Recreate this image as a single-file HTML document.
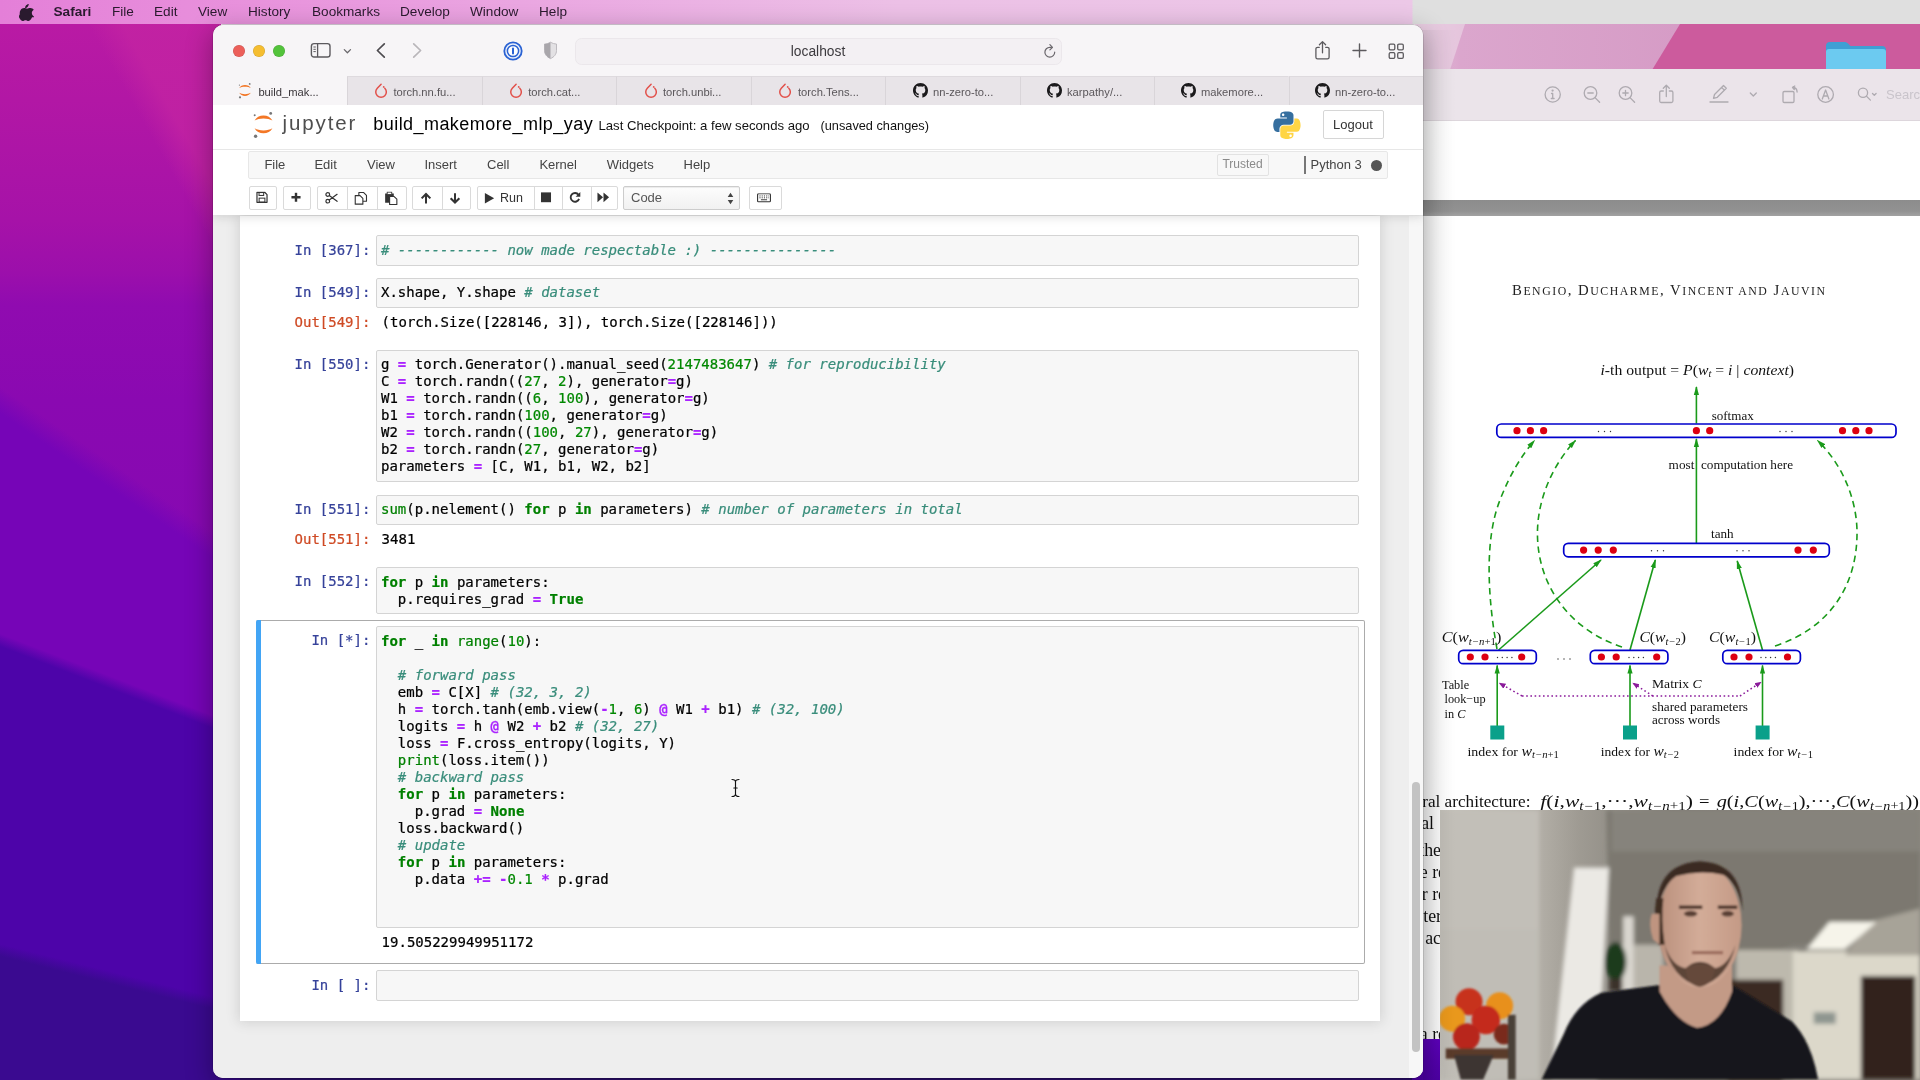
<!DOCTYPE html>
<html lang="en">
<head>
<meta charset="utf-8">
<title>build_makemore_mlp_yay</title>
<style>
*{box-sizing:border-box;margin:0;padding:0}
html,body{width:1920px;height:1080px;overflow:hidden}
body{position:relative;font-family:"Liberation Sans",sans-serif;background:#5a06b0;color:#000}
.abs{position:absolute}
#sf,#pv,#menubar{will-change:transform}
#wall{left:0;top:0;width:1920px;height:1080px;background:linear-gradient(180deg,#b91aa4 0,#9c10ac 330px,#7606b6 560px,#5004aa 720px,#3d0894 980px,#2c0e70 1080px)}
/* mac menubar */
#menubar{left:0;top:0;width:1920px;height:24px;background:linear-gradient(90deg,#e47fd8 0,#e892dc 250px,#eaa6e1 520px,#ecc0e6 900px,#ecc8e7 1412px,#dfdfdf 1413px,#dfdfdf 1920px);}
#menubar span{position:absolute;top:0;height:24px;line-height:23px;font-size:13.6px;color:#2a1a2e;white-space:nowrap}
/* preview window (right) */
#pv{left:1412px;top:24px;width:508px;height:1056px;overflow:hidden}
/* safari window */
#sf{left:213px;top:25px;width:1210px;height:1053px;border-radius:10px;background:#eeeeee;overflow:hidden;box-shadow:0 0 0 .5px rgba(0,0,0,.22),0 8px 26px 2px rgba(0,0,0,.30)}
#sftool{left:0;top:0;width:1210px;height:51px;background:#f7f5f7}
#sftabs{left:0;top:51px;width:1210px;height:29px;background:#e8e4e8}
.tab{position:absolute;top:0;height:29px;border-left:1px solid #d9d5d9;border-top:1px solid #dedade;font-size:11.200px;color:#5a565a;line-height:29px;white-space:nowrap}
.tab.act{background:#f7f5f7;border-left:none;border-top:none;color:#3a363a}
.tab .tx{position:absolute;top:1.500px}
.tab:not(.act) .tx{top:.5px;margin-left:-1px}
.tab:not(.act) svg{margin-top:-1px}
.tab svg{position:absolute}
#page{left:0;top:80px;width:1210px;height:973px;background:#eeeeee;overflow:hidden}
#jhead{left:0;top:0;width:1210px;height:109.500px;background:#fff;box-shadow:0 0 10px 1px rgba(87,87,87,.22)}
#jmenu{left:35px;top:46px;width:1140px;height:27.500px;background:#f8f8f8;border:1px solid #e7e7e7;border-radius:2px}
#jmenu span{position:absolute;top:0;line-height:25px;font-size:13px;color:#444;white-space:nowrap}
.tb{position:absolute;top:81px;height:23.500px;border:1px solid #dadada;background:#fff;border-radius:2px}
.tb i{position:absolute;top:0;bottom:0;width:1px;background:#dadada}
.tb svg{position:absolute;transform:translate(-1.500px,-1.200px) scale(.93)}
#nb{left:27px;top:111px;width:1140px;height:805px;background:#fff;box-shadow:0 0 12px 1px rgba(87,87,87,.2)}
.code,.prompt,.out{font-family:"DejaVu Sans Mono","Liberation Mono",monospace;font-size:14px;line-height:17px;white-space:pre;-webkit-text-stroke:.22px}
.inp{position:absolute;left:136px;width:983px;background:#f7f7f7;border:1px solid #d4d4d4;border-radius:2px}
.inp .code{position:absolute;left:4px;top:5.600px;color:#000}
.prompt{position:absolute;left:0;width:130.400px;text-align:right}
.pin{color:#36429a}.pout{color:#cf4a24;transform:translateY(1.200px)}
.out{position:absolute;left:141.600px;color:#000;transform:translateY(1.200px)}
.c{color:#398d7b;font-style:italic}.k{color:#008000;font-weight:bold}.n{color:#080}.o{color:#aa22ff;font-weight:bold}.b{color:#008000}
/* pdf */
.ser{font-family:"Liberation Serif",serif}
</style>
</head>
<body>
<div id="wall" class="abs"></div>
<div class="abs" style="left:0;top:0;width:240px;height:1080px;background:linear-gradient(193.97deg,rgba(58,10,144,0) 88.05%,rgba(58,10,144,1) 89.14%),linear-gradient(201.06deg,rgba(77,4,169,0) 61.92%,rgba(77,4,169,1) 63.02%),linear-gradient(214.25deg,rgba(118,5,183,0) 44.24%,rgba(118,5,183,1) 46.38%),linear-gradient(60.51deg,rgba(196,36,162,0) 80.51%,rgba(196,36,162,.75) 84.56%),linear-gradient(180deg,#b91aa4 24px,#b217a5 100px,#a612a8 220px,#9c0fab 272px,#900bb0 305px,#8a09b1 400px,#8509b2 600px)"></div>

<!-- PREVIEW -->
<div id="pv" class="abs">
 <!-- wallpaper strip -->
 <div class="abs" style="left:0;top:0px;width:508px;height:46px;background:#cc5b9d"></div>
 <svg class="abs" style="left:0;top:0px" width="508" height="46" viewBox="0 0 508 46"><defs><linearGradient id="pg1" x1="0" x2="1"><stop offset="0" stop-color="#e6c6dd"/><stop offset=".18" stop-color="#dba6cd"/><stop offset="1" stop-color="#d69cc6"/></linearGradient></defs><path d="M0 0H268L240 46H0z" fill="url(#pg1)"/><path d="M0 0H53L38 46H0z" fill="#ead3e4" opacity=".7"/></svg>
 <!-- folder -->
 <svg class="abs" style="left:413px;top:16px" width="62" height="30" viewBox="0 0 62 30"><path d="M1 30V6a4 4 0 0 1 4-4h14c2 0 3 .6 4.500 2l2 2H57a4 4 0 0 1 4 4v20z" fill="#3f9fd4"/><path d="M1 30V12a3 3 0 0 1 3-3h54a3 3 0 0 1 3 3v18z" fill="#6ccaf0"/></svg>
 <!-- toolbar -->
 <div class="abs" style="left:0;top:45px;width:508px;height:52px;background:#ebe4ea;border-bottom:1px solid #ddd6dc"></div>
 <g></g>
 <svg class="abs" style="left:128px;top:56px" width="380" height="30" viewBox="0 0 380 30" fill="none" stroke="#aeaab0" stroke-width="1.300" stroke-linecap="round" stroke-linejoin="round">
  <circle cx="12.700" cy="14.500" r="7.600"/><path d="M12.700 13.500v5M11.300 18.500h2.800M11.500 13.500h1.200"/><circle cx="12.600" cy="10.600" r=".5" fill="#aeaab0"/>
  <circle cx="50.500" cy="13" r="6.300"/><path d="M55 17.600l4.600 4.600M47.800 13h5.400"/>
  <circle cx="85.500" cy="13" r="6.300"/><path d="M90 17.600l4.600 4.600M82.800 13h5.400M85.500 10.300v5.400"/>
  <path d="M123.300 11h-2.100a1.500 1.500 0 0 0-1.500 1.500v8.500a1.500 1.500 0 0 0 1.500 1.500h10.200a1.500 1.500 0 0 0 1.500-1.500v-8.500a1.500 1.500 0 0 0-1.500-1.500h-2.100M126.300 16.500V5.500M123.300 8.300l3-3 3 3"/>
  <path d="M170 22h18M173.500 18.300l1-3.800 9-9 2.800 2.800-9 9zM181.600 7.400l2.800 2.800"/>
  <path d="M210.300 13l3 3 3-3"/>
  <rect x="243" y="11.500" width="11" height="11" rx="1.300"/><path d="M252.500 7.500c3 0 4.600 1.600 4.600 4.600M254.800 6l-2.300 1.500 1.800 2"/>
  <circle cx="285.600" cy="14.500" r="7.800"/><path d="M282.300 19l3.300-9 3.300 9M283.600 16h4"/>
  <circle cx="323" cy="12.700" r="4.600"/><path d="M326.400 16.100l4 4M332.500 13.500l1.800 1.800 1.800-1.800"/>
 </svg>
 <div class="abs" style="left:474px;top:62px;font-size:13px;line-height:18px;color:#c9c4cb">Search</div>
 <!-- white gap + grey bar + page -->
 <div class="abs" style="left:0;top:97px;width:508px;height:80px;background:#fff"></div>
 <div class="abs" style="left:0;top:176px;width:508px;height:15.500px;background:linear-gradient(#8c8c8c,#929292 70%,#a2a2a2)"></div>
 <div class="abs" style="left:0;top:191.5px;width:508px;height:823.5px;background:#fff"></div>
 <div class="abs" style="left:0;top:1015px;width:508px;height:41px;background:linear-gradient(#5e00be,#4e00a6)"></div>
<svg class="abs ser" style="left:0;top:0" width="508" height="1015" viewBox="1412 24 508 1015" font-family="Liberation Serif, serif">
 <defs>
  <marker id="ag" markerUnits="userSpaceOnUse" viewBox="0 0 9 6" refX="8" refY="3" markerWidth="9" markerHeight="6" orient="auto-start-reverse"><path d="M0 .4L9 3L0 5.600z" fill="#1a9a1a"/></marker>
  <marker id="ap" viewBox="0 0 10 10" refX="8" refY="5" markerWidth="4.600" markerHeight="4.600" orient="auto-start-reverse"><path d="M0 1L10 5L0 9z" fill="#8a1a9a"/></marker>
 </defs>
 <!-- title -->
 <text id="pdftitle" x="1512" y="294.500" font-size="14.800" fill="#222" textLength="313" lengthAdjust="spacing">B<tspan font-size="11.800">ENGIO</tspan>, D<tspan font-size="11.800">UCHARME</tspan>, V<tspan font-size="11.800">INCENT AND</tspan> J<tspan font-size="11.800">AUVIN</tspan></text>
 <!-- top label -->
 <text x="1600.500" y="374.500" font-size="14.300" fill="#111" textLength="193.500" lengthAdjust="spacingAndGlyphs"><tspan font-style="italic">i</tspan>-th output = <tspan font-style="italic">P</tspan>(<tspan font-style="italic">w</tspan><tspan font-size="9.500" font-style="italic" dy="2.500">t</tspan><tspan dy="-2.500"> </tspan> = <tspan font-style="italic"> i</tspan> | <tspan font-style="italic">context</tspan>)</text>
 <!-- green solid lines -->
 <g stroke="#1a9a1a" stroke-width="1.600" fill="none">
  <path d="M1696.400 423.500V387" marker-end="url(#ag)"/>
  <path d="M1696.400 543.500V439" marker-end="url(#ag)"/>
  <path d="M1498.600 650L1601 560" marker-end="url(#ag)"/>
  <path d="M1630 650L1655.300 560" marker-end="url(#ag)"/>
  <path d="M1762.500 650L1737.200 561" marker-end="url(#ag)"/>
  <path d="M1497.200 726V665.500" marker-end="url(#ag)"/>
  <path d="M1630 726V665.500" marker-end="url(#ag)"/>
  <path d="M1762.500 726V665.500" marker-end="url(#ag)"/>
 </g>
 <!-- green dashed curves -->
 <g stroke="#1a9a1a" stroke-width="1.600" fill="none" stroke-dasharray="6.500 4.500">
  <path d="M1497 649C1488 600 1484 540 1500 500C1510 474 1522 455 1534.500 440.500" marker-end="url(#ag)"/>
  <path d="M1622 647C1570 630 1536 585 1537.500 530C1538.500 495 1555 462 1575.500 440.500" marker-end="url(#ag)"/>
  <path d="M1775 646C1830 628 1858 585 1857 530C1856 495 1840 462 1817.500 440.500" marker-end="url(#ag)"/>
 </g>
 <!-- boxes -->
 <g stroke="#0000cc" stroke-width="1.700" fill="#fff">
  <rect x="1496.800" y="424" width="399.200" height="13.400" rx="4.500"/>
  <rect x="1563.700" y="543.400" width="265.600" height="13.400" rx="4.500"/>
  <rect x="1458.700" y="650.300" width="77.600" height="13.400" rx="4.500"/>
  <rect x="1590.300" y="650.300" width="77.600" height="13.400" rx="4.500"/>
  <rect x="1722.800" y="650.300" width="77.600" height="13.400" rx="4.500"/>
 </g>
 <g fill="#dd0011">
  <circle cx="1517" cy="430.7" r="3.6"/><circle cx="1530.4" cy="430.7" r="3.6"/><circle cx="1543.6" cy="430.7" r="3.6"/><circle cx="1696.4" cy="430.7" r="3.6"/><circle cx="1709.7" cy="430.7" r="3.6"/><circle cx="1842.5" cy="430.7" r="3.6"/><circle cx="1855.8" cy="430.7" r="3.6"/><circle cx="1869" cy="430.7" r="3.6"/>
  <circle cx="1583.6" cy="550.1" r="3.6"/><circle cx="1598.2" cy="550.1" r="3.6"/><circle cx="1613.3" cy="550.1" r="3.6"/><circle cx="1798" cy="550.1" r="3.6"/><circle cx="1813.3" cy="550.1" r="3.6"/>
  <circle cx="1470.3" cy="657" r="3.6"/><circle cx="1485" cy="657" r="3.6"/><circle cx="1521.7" cy="657" r="3.6"/><circle cx="1601.4" cy="657" r="3.6"/><circle cx="1616.2" cy="657" r="3.6"/><circle cx="1656.7" cy="657" r="3.6"/><circle cx="1734" cy="657" r="3.6"/><circle cx="1749" cy="657" r="3.6"/><circle cx="1787.5" cy="657" r="3.6"/>
 </g>
 <g fill="#333">
  <circle cx="1598.5" cy="431.5" r="0.7"/><circle cx="1604.5" cy="431.5" r="0.7"/><circle cx="1610.5" cy="431.5" r="0.7"/><circle cx="1780" cy="431.5" r="0.7"/><circle cx="1786" cy="431.5" r="0.7"/><circle cx="1792" cy="431.5" r="0.7"/>
  <circle cx="1651.5" cy="550.8" r="0.7"/><circle cx="1657.5" cy="550.8" r="0.7"/><circle cx="1663.5" cy="550.8" r="0.7"/><circle cx="1737" cy="550.8" r="0.7"/><circle cx="1743" cy="550.8" r="0.7"/><circle cx="1749" cy="550.8" r="0.7"/>
  <circle cx="1497.5" cy="657.5" r="0.7"/><circle cx="1502.3" cy="657.5" r="0.7"/><circle cx="1507.1" cy="657.5" r="0.7"/><circle cx="1511.9" cy="657.5" r="0.7"/><circle cx="1629" cy="657.5" r="0.7"/><circle cx="1633.8" cy="657.5" r="0.7"/><circle cx="1638.6" cy="657.5" r="0.7"/><circle cx="1643.4" cy="657.5" r="0.7"/><circle cx="1761" cy="657.5" r="0.7"/><circle cx="1765.8" cy="657.5" r="0.7"/><circle cx="1770.6" cy="657.5" r="0.7"/><circle cx="1775.4" cy="657.5" r="0.7"/>
  <circle cx="1558" cy="659" r="0.7"/><circle cx="1564" cy="659" r="0.7"/><circle cx="1570" cy="659" r="0.7"/>
 </g>
 <!-- teal squares -->
 <g fill="#0aa08a"><rect x="1490.300" y="725.500" width="14" height="14"/><rect x="1623" y="725.500" width="14" height="14"/><rect x="1755.600" y="725.500" width="14" height="14"/></g>
 <!-- purple dotted -->
 <g stroke="#8a1a9a" stroke-width="1.500" fill="none" stroke-dasharray="1.600 2.600">
  <path d="M1522 696H1740"/>
  <path d="M1522 696L1500 683.500" marker-end="url(#ap)"/>
  <path d="M1740 696L1760.500 682.500" marker-end="url(#ap)"/>
  <path d="M1652.800 696L1633.500 683.500" marker-end="url(#ap)"/>
 </g>
 <!-- labels -->
 <g fill="#111" font-size="12.300">
  <text x="1711.700" y="419.500" textLength="42" lengthAdjust="spacingAndGlyphs">softmax</text>
  <text x="1668.600" y="469.400" textLength="124.500" lengthAdjust="spacingAndGlyphs">most&#160;&#160;computation here</text>
  <text x="1711" y="538.300" textLength="22.600" lengthAdjust="spacingAndGlyphs">tanh</text>
  <text x="1442" y="689">Table</text>
  <text x="1444.500" y="703.400">look−up</text>
  <text x="1444.500" y="718">in <tspan font-style="italic">C</tspan></text>
  <text x="1652" y="688" textLength="49.500" lengthAdjust="spacingAndGlyphs">Matrix <tspan font-style="italic">C</tspan></text>
  <text x="1652" y="711" textLength="96" lengthAdjust="spacingAndGlyphs">shared parameters</text>
  <text x="1652" y="724.300" textLength="68" lengthAdjust="spacingAndGlyphs">across words</text>
  <text x="1467.500" y="755.500" textLength="91.500" lengthAdjust="spacingAndGlyphs">index for <tspan font-style="italic" font-size="14">w</tspan><tspan font-style="italic" font-size="9.500" dy="2.800">t−n</tspan><tspan font-size="9.500">+1</tspan></text>
  <text x="1600.800" y="755.500" textLength="78.200" lengthAdjust="spacingAndGlyphs">index for <tspan font-style="italic" font-size="14">w</tspan><tspan font-style="italic" font-size="9.500" dy="2.800">t−</tspan><tspan font-size="9.500">2</tspan></text>
  <text x="1733.600" y="755.500" textLength="79.400" lengthAdjust="spacingAndGlyphs">index for <tspan font-style="italic" font-size="14">w</tspan><tspan font-style="italic" font-size="9.500" dy="2.800">t−</tspan><tspan font-size="9.500">1</tspan></text>
 </g>
 <g fill="#111" font-size="14.300">
  <text x="1441.700" y="641.700" textLength="59.700" lengthAdjust="spacingAndGlyphs"><tspan font-style="italic">C</tspan>(<tspan font-style="italic">w</tspan><tspan font-style="italic" font-size="9.500" dy="2.800">t−n</tspan><tspan font-size="9.500">+1</tspan><tspan dy="-2.800">)</tspan></text>
  <text x="1639.400" y="641.700" textLength="46.600" lengthAdjust="spacingAndGlyphs"><tspan font-style="italic">C</tspan>(<tspan font-style="italic">w</tspan><tspan font-style="italic" font-size="9.500" dy="2.800">t−</tspan><tspan font-size="9.500">2</tspan><tspan dy="-2.800">)</tspan></text>
  <text x="1709" y="641.700" textLength="47" lengthAdjust="spacingAndGlyphs"><tspan font-style="italic">C</tspan>(<tspan font-style="italic">w</tspan><tspan font-style="italic" font-size="9.500" dy="2.800">t−</tspan><tspan font-size="9.500">1</tspan><tspan dy="-2.800">)</tspan></text>
 </g>
 <!-- formula line -->
 <g font-size="17.300" fill="#111">
 <text x="1422.200" y="807.200" textLength="108.300" lengthAdjust="spacingAndGlyphs">ral architecture:</text>
 <text x="1540.300" y="807.200" textLength="152.700" lengthAdjust="spacingAndGlyphs"><tspan font-style="italic">f</tspan>(<tspan font-style="italic">i</tspan>,<tspan font-style="italic">w</tspan><tspan font-style="italic" font-size="12" dy="2.400">t−</tspan><tspan font-size="12">1</tspan><tspan dy="-2.400">,</tspan>···,<tspan font-style="italic">w</tspan><tspan font-style="italic" font-size="12" dy="2.400">t−n</tspan><tspan font-size="12">+1</tspan><tspan dy="-2.400">)</tspan></text>
 <text x="1699" y="807.200" textLength="10.500" lengthAdjust="spacingAndGlyphs">=</text>
 <text x="1716.700" y="807.200" textLength="202.300" lengthAdjust="spacingAndGlyphs"><tspan font-style="italic">g</tspan>(<tspan font-style="italic">i</tspan>,<tspan font-style="italic">C</tspan>(<tspan font-style="italic">w</tspan><tspan font-style="italic" font-size="12" dy="2.400">t−</tspan><tspan font-size="12">1</tspan><tspan dy="-2.400">)</tspan>,···,<tspan font-style="italic">C</tspan>(<tspan font-style="italic">w</tspan><tspan font-style="italic" font-size="12" dy="2.400">t−n</tspan><tspan font-size="12">+1</tspan><tspan dy="-2.400">)</tspan>)</text>
 </g>
 <g font-size="17.800" fill="#111" text-anchor="end">
  <text x="1434" y="828.500">ral</text>
  <text x="1441" y="855.500">the</text>
  <text x="1446" y="877.500">e re</text>
  <text x="1446" y="899.500">r re</text>
  <text x="1442" y="921.500">ter</text>
  <text x="1441" y="943.500">ac</text>
  <text x="1446" y="1040">a re</text>
 </g>
</svg>
<svg class="abs" style="left:28px;top:786.400px" width="480" height="270" viewBox="38 40 1852 1041.500" preserveAspectRatio="none">
  <defs>
   <filter id="cb" x="-5%" y="-5%" width="110%" height="110%"><feGaussianBlur stdDeviation="9"/></filter>
   <filter id="cb2" x="-5%" y="-5%" width="110%" height="110%"><feGaussianBlur stdDeviation="4"/></filter>
   <linearGradient id="cw" x1="0" x2="1"><stop offset="0" stop-color="#c9c6bf"/><stop offset=".22" stop-color="#b3afa7"/><stop offset=".3" stop-color="#9f9b93"/><stop offset=".5" stop-color="#7f7c75"/><stop offset="1" stop-color="#8a877f"/></linearGradient>
   <linearGradient id="cskin" x1="0" x2="1"><stop offset="0" stop-color="#b98f7c"/><stop offset=".5" stop-color="#d3ac98"/><stop offset="1" stop-color="#c49a86"/></linearGradient>
   <clipPath id="camclip"><rect x="38" y="40" width="1852" height="1045"/></clipPath>
  </defs>
  <g clip-path="url(#camclip)">
  <rect x="0" y="0" width="1900" height="1100" fill="url(#cw)"/>
  <g filter="url(#cb)">
   <path d="M680 40H1890V560H1400L1300 600H900L800 560H690z" fill="#7b7870"/>
   <path d="M700 40H1890V200H700z" fill="#86837b"/>
   <path d="M38 40H420V1080H38z" fill="#c2bfb8"/>
   <path d="M38 500H420V1080H38z" fill="#c0bdb6"/>
   <path d="M555 262H690L645 1080H465z" fill="#ebe9e4"/>
   <path d="M690 560H900V740H690z" fill="#b9b5ab"/>
   <path d="M745 450H785V740H745z" fill="#d9d6cf"/>
   <path d="M1180 580H1420V1080H1180z" fill="#bdb9ad"/>
   <path d="M1400 585H1890V1080H1400z" fill="#dcd8ca"/>
   <path d="M1890 420V600H1600L1700 470z" fill="#a7a398"/>
   <path d="M1540 472H1722L1600 578H1452z" fill="#f6f4ea"/>
   <path d="M1150 695H1362V1080H1150z" fill="#3a2a23"/>
   <path d="M1662 680H1872V1080H1662z" fill="#32231d"/>
   <path d="M1480 820H1565V865H1480z" fill="#8f9690"/>
   <ellipse cx="715" cy="625" rx="42" ry="75" fill="#1f3a1d"/>
   <path d="M690 690H740V740H690z" fill="#3b302a"/>
  </g>
  <g filter="url(#cb2)">
   <!-- figure: neutral shapes -->
   <path d="M430 1080L515 905Q560 790 660 745L885 715Q960 860 1030 880Q1100 860 1165 715L1215 745L1395 855Q1470 930 1497 1080z" fill="#14151b"/>
   <path d="M885 640H1165V740Q1120 870 1030 880Q950 860 885 740z" fill="#c39a86"/>
   <ellipse cx="1040" cy="485" rx="162" ry="240" fill="url(#cskin)"/>
   <path d="M875 430Q870 250 1040 238Q1205 245 1205 430Q1190 320 1130 290Q1040 270 950 295Q895 330 875 430z" fill="#3a2920"/>
   <path d="M872 380Q860 460 880 560L905 560Q890 460 900 380z" fill="#3f2d24"/>
   <path d="M905 560Q930 690 1040 722Q1150 690 1178 560Q1150 640 1100 650Q1040 600 985 650Q930 640 905 560z" fill="#5c4438"/>
   <path d="M985 650Q1040 620 1100 650Q1090 715 1040 722Q990 715 985 650z" fill="#65493b"/>
   <path d="M855 440Q840 480 860 540L885 560V440z" fill="#bf9480"/>
   <path d="M960 415H1050M1110 415H1185" stroke="#4a3328" stroke-width="14" fill="none"/>
   <ellipse cx="1005" cy="440" rx="26" ry="11" fill="#5a4034"/><ellipse cx="1148" cy="440" rx="24" ry="11" fill="#5a4034"/>
   <path d="M1010 590H1130" stroke="#9a6a5c" stroke-width="12" fill="none"/>
   <!-- flowers -->
   <circle cx="150" cy="780" r="52" fill="#c7301f"/>
   <circle cx="268" cy="795" r="52" fill="#e8901d"/>
   <circle cx="85" cy="845" r="50" fill="#e9981f"/>
   <circle cx="215" cy="850" r="55" fill="#c42b1c"/>
   <circle cx="140" cy="915" r="52" fill="#b8261b"/>
   <circle cx="285" cy="905" r="40" fill="#7a2c1a"/>
   <path d="M60 960H310V1000H60z" fill="#5a3a2a"/>
   <path d="M92 985H245L205 1080H118z" fill="#3d3531"/>
   <path d="M300 830H330V1080H300z" fill="#4a4039"/>
  </g>
  </g>
 </svg>
 <!-- safari shadow on preview -->
 <div class="abs" style="left:11px;top:6px;width:34px;height:1050px;background:linear-gradient(90deg,rgba(0,0,0,.05),rgba(0,0,0,.02) 50%,rgba(0,0,0,0))"></div>
</div>

<!-- MENUBAR -->
<div id="menubar" class="abs">
 <svg class="abs" style="left:19px;top:3.5px" width="15" height="17" viewBox="0 0 170 200"><path fill="#2a1a2e" d="M150.4 155.7c-3 7-6.600 13.400-10.700 19.300-5.700 8.100-10.300 13.700-13.900 16.800-5.500 5.100-11.500 7.700-17.800 7.800-4.600 0-10.100-1.300-16.500-3.900-6.400-2.600-12.300-3.900-17.700-3.900-5.700 0-11.700 1.300-18.200 3.900-6.500 2.600-11.700 4-15.700 4.100-6.100.3-12.200-2.400-18.200-8-3.900-3.400-8.700-9.200-14.600-17.400-6.200-8.800-11.400-19-15.400-30.600C7.300 131.200 5.200 119 5.200 107.200c0-13.500 2.900-25.200 8.800-35 4.600-7.800 10.700-14 18.300-18.600 7.600-4.500 15.900-6.900 24.800-7 4.900 0 11.200 1.500 19.200 4.500 7.900 3 13 4.500 15.200 4.500 1.700 0 7.300-1.800 17-5.300 9.100-3.300 16.900-4.600 23.200-4.100 17.100 1.400 30 8.100 38.600 20.300-15.300 9.300-22.900 22.300-22.700 38.900.1 13 4.900 23.800 14.100 32.400 4.200 4 8.900 7 14.100 9.200-1.100 3.300-2.300 6.400-3.600 9.400zM111.100 4c0 10.200-3.700 19.700-11.100 28.500-8.900 10.400-19.700 16.500-31.500 15.500a31.600 31.600 0 0 1-.2-3.900c0-9.800 4.300-20.300 11.800-28.800 3.800-4.300 8.600-7.900 14.400-10.800C100.300 1.700 105.800.2 111 0c.1 1.400.1 2.700.1 4z"/></svg>
 <span style="left:53.5px;font-weight:bold">Safari</span>
 <span style="left:112px">File</span>
 <span style="left:154px">Edit</span>
 <span style="left:198px">View</span>
 <span style="left:248px">History</span>
 <span style="left:312px">Bookmarks</span>
 <span style="left:400px">Develop</span>
 <span style="left:470px">Window</span>
 <span style="left:539px">Help</span>
</div>

<!-- SAFARI -->
<div class="abs" style="left:221px;top:24px;width:1194px;height:2px;background:#f1e6f0"></div>
<div id="sf" class="abs">
<div id="sftool" class="abs">
  <div class="abs" style="left:20px;top:20px;width:12px;height:12px;border-radius:50%;background:#ec5f5a;box-shadow:inset 0 0 0 .5px rgba(0,0,0,.15)"></div>
  <div class="abs" style="left:40px;top:20px;width:12px;height:12px;border-radius:50%;background:#f5bd30;box-shadow:inset 0 0 0 .5px rgba(0,0,0,.15)"></div>
  <div class="abs" style="left:60.2px;top:20px;width:12px;height:12px;border-radius:50%;background:#53c33b;box-shadow:inset 0 0 0 .5px rgba(0,0,0,.15)"></div>
  <svg class="abs" style="left:97px;top:17px" width="22" height="17" viewBox="0 0 22 17"><rect x="1.4" y="1.6" width="18.6" height="13.4" rx="2.6" fill="none" stroke="#5c5a5e" stroke-width="1.4"/><path d="M7.6 1.6v13.4" stroke="#5c5a5e" stroke-width="1.3"/><path d="M3.4 5h2.4M3.4 7.3h2.4M3.4 9.600h2.4" stroke="#5c5a5e" stroke-width="1"/></svg>
  <svg class="abs" style="left:130px;top:22.5px" width="9" height="7" viewBox="0 0 9 7"><path d="M1.300 1.600l3.100 3.100 3.100-3.100" fill="none" stroke="#6a686c" stroke-width="1.3" stroke-linecap="round" stroke-linejoin="round"/></svg>
  <svg class="abs" style="left:162px;top:17px" width="12" height="17" viewBox="0 0 12 17"><path d="M9.300 1.800L2.400 8.500l6.900 6.700" fill="none" stroke="#4e4c50" stroke-width="1.700" stroke-linecap="round" stroke-linejoin="round"/></svg>
  <svg class="abs" style="left:197.5px;top:17px" width="12" height="17" viewBox="0 0 12 17"><path d="M2.700 1.800l6.900 6.700-6.900 6.700" fill="none" stroke="#b9b6ba" stroke-width="1.700" stroke-linecap="round" stroke-linejoin="round"/></svg>
  <svg class="abs" style="left:290px;top:15.5px" width="20" height="20" viewBox="0 0 20 20"><circle cx="10" cy="10" r="8.700" fill="#e9effb" stroke="#2a62d3" stroke-width="1.800"/><circle cx="10" cy="10" r="5.600" fill="#fff" stroke="#2a62d3" stroke-width="1.500"/><rect x="9" y="6.600" width="2" height="6.800" rx="1" fill="#2a62d3"/></svg>
  <svg class="abs" style="left:330px;top:16px" width="15" height="19" viewBox="0 0 15 19"><path d="M7.500 1.200c2 1.200 4 1.700 6 1.800v6.500c0 3.800-2.400 6.500-6 8.100-3.600-1.600-6-4.300-6-8.100V3c2-.1 4-.6 6-1.800z" fill="#e3e1e4" stroke="#bdbabf" stroke-width="1"/><path d="M7.500 1.200c-2 1.200-4 1.700-6 1.800v6.500c0 3.800 2.400 6.500 6 8.100z" fill="#a9a6ab"/></svg>
  <div class="abs" style="left:361.5px;top:13px;width:487px;height:26.500px;border-radius:6.500px;background:#f3f0f3;border:1px solid #ebe7eb"></div>
  <div class="abs" id="urltxt" style="left:505px;top:13px;width:200px;text-align:center;line-height:27px;font-size:13.800px;color:#3c3a3e">localhost</div>
  <svg class="abs" style="left:830px;top:18px" width="14" height="16" viewBox="0 0 14 16"><path d="M11.700 9.200a4.900 4.900 0 1 1-4.900-4.900h1.600" fill="none" stroke="#69666b" stroke-width="1.200" stroke-linecap="round"/><path d="M6.900 1.700l2.600 2.600-2.600 2.600" fill="none" stroke="#69666b" stroke-width="1.200" stroke-linecap="round" stroke-linejoin="round"/></svg>
  <svg class="abs" style="left:1100.5px;top:14.5px" width="17" height="21" viewBox="0 0 17 21"><path d="M5.300 7.300H3.600a1.700 1.700 0 0 0-1.700 1.700v8.200a1.700 1.700 0 0 0 1.700 1.700h9.800a1.700 1.700 0 0 0 1.700-1.700V9a1.700 1.700 0 0 0-1.700-1.700h-1.700" fill="none" stroke="#5c5a5e" stroke-width="1.300" stroke-linecap="round"/><path d="M8.500 12.800V1.800M5.400 4.700l3.100-3.100 3.100 3.100" fill="none" stroke="#5c5a5e" stroke-width="1.300" stroke-linecap="round" stroke-linejoin="round"/></svg>
  <svg class="abs" style="left:1138.5px;top:17.5px" width="15" height="15" viewBox="0 0 15 15"><path d="M7.500 1v13M1 7.500h13" stroke="#5c5a5e" stroke-width="1.400" stroke-linecap="round"/></svg>
  <svg class="abs" style="left:1175px;top:17.5px" width="17" height="17" viewBox="0 0 17 17"><g fill="none" stroke="#5c5a5e" stroke-width="1.300"><rect x="1.200" y="1.200" width="5.600" height="5.600" rx="1.200"/><rect x="9.700" y="1.200" width="5.600" height="5.600" rx="1.200"/><rect x="1.200" y="9.700" width="5.600" height="5.600" rx="1.200"/><rect x="9.700" y="9.700" width="5.600" height="5.600" rx="1.200"/></g></svg>
 </div>
<div id="sftabs" class="abs">
  <div class="tab act" style="left:0.0px;width:134.4px"><svg style="left:23.7px;top:6px" width="16" height="17" viewBox="0 0 16 17"><path d="M2.200 6.200C3.300 4.200 5.500 3 8 3s4.700 1.200 5.800 3.200C12.300 5.300 10.300 4.800 8 4.800S3.700 5.300 2.200 6.200z" fill="#f37726"/><path d="M2.200 10.800C3.300 12.800 5.500 14 8 14s4.700-1.200 5.800-3.200c-1.500.9-3.500 1.400-5.800 1.400s-4.300-.5-5.800-1.400z" fill="#f37726"/><circle cx="12.700" cy="1.900" r=".9" fill="#767677"/><circle cx="3" cy="15.300" r="1.100" fill="#767677"/><circle cx="2.400" cy="3.100" r=".6" fill="#767677"/></svg><span class="tx" style="left:45.4px">build_mak...</span></div>
  <div class="tab" style="left:134.4px;width:134.4px"><svg style="left:25.6px;top:7px" width="14" height="16" viewBox="0 0 14 16"><path d="M7.100 1.300L3.300 5.200a5.300 5.300 0 1 0 7.500 0" fill="none" stroke="#e2504a" stroke-width="1.500" stroke-linecap="round"/><circle cx="9.700" cy="3.900" r=".9" fill="#e2504a"/></svg><span class="tx" style="left:46.0px">torch.nn.fu...</span></div>
  <div class="tab" style="left:268.9px;width:134.4px"><svg style="left:26.1px;top:7px" width="14" height="16" viewBox="0 0 14 16"><path d="M7.100 1.300L3.300 5.200a5.300 5.300 0 1 0 7.500 0" fill="none" stroke="#e2504a" stroke-width="1.500" stroke-linecap="round"/><circle cx="9.700" cy="3.900" r=".9" fill="#e2504a"/></svg><span class="tx" style="left:46.3px">torch.cat...</span></div>
  <div class="tab" style="left:403.3px;width:134.4px"><svg style="left:26.7px;top:7px" width="14" height="16" viewBox="0 0 14 16"><path d="M7.100 1.300L3.300 5.200a5.300 5.300 0 1 0 7.500 0" fill="none" stroke="#e2504a" stroke-width="1.500" stroke-linecap="round"/><circle cx="9.700" cy="3.900" r=".9" fill="#e2504a"/></svg><span class="tx" style="left:46.7px">torch.unbi...</span></div>
  <div class="tab" style="left:537.8px;width:134.4px"><svg style="left:26.7px;top:7px" width="14" height="16" viewBox="0 0 14 16"><path d="M7.100 1.300L3.300 5.200a5.300 5.300 0 1 0 7.500 0" fill="none" stroke="#e2504a" stroke-width="1.500" stroke-linecap="round"/><circle cx="9.700" cy="3.900" r=".9" fill="#e2504a"/></svg><span class="tx" style="left:47.2px">torch.Tens...</span></div>
  <div class="tab" style="left:672.2px;width:134.4px"><svg style="left:27.1px;top:7px" width="15" height="15" viewBox="0 0 16 16"><path fill="#1b1a1c" d="M8 0C3.580 0 0 3.580 0 8c0 3.540 2.290 6.530 5.470 7.590.4.070.55-.17.55-.38 0-.19-.01-.82-.01-1.490-2.010.37-2.530-.49-2.690-.94-.09-.23-.48-.94-.82-1.130-.28-.15-.68-.52-.01-.53.630-.01 1.080.58 1.230.82.720 1.210 1.870.87 2.330.66.070-.52.280-.87.510-1.070-1.780-.2-3.640-.89-3.640-3.950 0-.87.310-1.590.82-2.150-.08-.2-.36-1.020.08-2.120 0 0 .67-.21 2.200.82.640-.18 1.320-.27 2-.27s1.360.09 2 .27c1.530-1.040 2.200-.82 2.200-.82.440 1.100.16 1.920.08 2.120.51.560.82 1.270.82 2.150 0 3.070-1.870 3.750-3.650 3.950.29.250.54.730.54 1.480 0 1.070-.01 1.930-.01 2.200 0 .21.150.46.550.38A8.013 8.013 0 0 0 16 8c0-4.420-3.580-8-8-8z"/></svg><span class="tx" style="left:47.8px">nn-zero-to...</span></div>
  <div class="tab" style="left:806.7px;width:134.4px"><svg style="left:26.6px;top:7px" width="15" height="15" viewBox="0 0 16 16"><path fill="#1b1a1c" d="M8 0C3.580 0 0 3.580 0 8c0 3.540 2.290 6.530 5.470 7.590.4.070.55-.17.55-.38 0-.19-.01-.82-.01-1.490-2.010.37-2.530-.49-2.690-.94-.09-.23-.48-.94-.82-1.130-.28-.15-.68-.52-.01-.53.630-.01 1.080.58 1.230.82.720 1.210 1.870.87 2.330.66.070-.52.280-.87.510-1.070-1.780-.2-3.640-.89-3.640-3.950 0-.87.310-1.590.82-2.150-.08-.2-.36-1.020.08-2.120 0 0 .67-.21 2.200.82.640-.18 1.320-.27 2-.27s1.360.09 2 .27c1.530-1.040 2.200-.82 2.200-.82.440 1.100.16 1.920.08 2.120.51.560.82 1.270.82 2.150 0 3.070-1.870 3.750-3.650 3.950.29.250.54.730.54 1.480 0 1.070-.01 1.930-.01 2.200 0 .21.150.46.550.38A8.013 8.013 0 0 0 16 8c0-4.420-3.580-8-8-8z"/></svg><span class="tx" style="left:47.3px">karpathy/...</span></div>
  <div class="tab" style="left:941.1px;width:134.4px"><svg style="left:26.1px;top:7px" width="15" height="15" viewBox="0 0 16 16"><path fill="#1b1a1c" d="M8 0C3.580 0 0 3.580 0 8c0 3.540 2.290 6.530 5.470 7.590.4.070.55-.17.55-.38 0-.19-.01-.82-.01-1.490-2.010.37-2.530-.49-2.690-.94-.09-.23-.48-.94-.82-1.130-.28-.15-.68-.52-.01-.53.630-.01 1.080.58 1.230.82.720 1.210 1.870.87 2.330.66.070-.52.280-.87.510-1.070-1.780-.2-3.640-.89-3.640-3.950 0-.87.310-1.590.82-2.150-.08-.2-.36-1.020.08-2.120 0 0 .67-.21 2.200.82.640-.18 1.320-.27 2-.27s1.360.09 2 .27c1.530-1.040 2.200-.82 2.200-.82.440 1.100.16 1.920.08 2.120.51.560.82 1.270.82 2.150 0 3.070-1.870 3.750-3.650 3.950.29.250.54.730.54 1.480 0 1.070-.01 1.930-.01 2.200 0 .21.150.46.550.38A8.013 8.013 0 0 0 16 8c0-4.420-3.580-8-8-8z"/></svg><span class="tx" style="left:46.9px">makemore...</span></div>
  <div class="tab" style="left:1075.6px;width:134.4px"><svg style="left:25.7px;top:7px" width="15" height="15" viewBox="0 0 16 16"><path fill="#1b1a1c" d="M8 0C3.580 0 0 3.580 0 8c0 3.540 2.290 6.530 5.470 7.590.4.070.55-.17.55-.38 0-.19-.01-.82-.01-1.490-2.010.37-2.530-.49-2.690-.94-.09-.23-.48-.94-.82-1.130-.28-.15-.68-.52-.01-.53.630-.01 1.080.58 1.230.82.720 1.210 1.870.87 2.330.66.070-.52.280-.87.510-1.070-1.780-.2-3.640-.89-3.640-3.950 0-.87.310-1.590.82-2.150-.08-.2-.36-1.020.08-2.120 0 0 .67-.21 2.200.82.640-.18 1.320-.27 2-.27s1.360.09 2 .27c1.530-1.040 2.200-.82 2.200-.82.440 1.100.16 1.920.08 2.120.51.560.82 1.270.82 2.150 0 3.070-1.870 3.750-3.650 3.950.29.250.54.730.54 1.480 0 1.070-.01 1.930-.01 2.200 0 .21.150.46.550.38A8.013 8.013 0 0 0 16 8c0-4.420-3.580-8-8-8z"/></svg><span class="tx" style="left:46.4px">nn-zero-to...</span></div>
 </div>
 <div id="page" class="abs">
<div id="nb" class="abs">
   <div class="abs" style="left:16px;top:404px;width:1109px;height:344px;border:1px solid #ababab;border-radius:2px;border-left:none;background:#fff"></div>
   <div class="abs" style="left:16px;top:404px;width:5px;height:344px;background:#42a5f5;border-radius:2px 0 0 2px"></div>
   <div class="prompt pin" style="top:25.6px">In [367]:</div>
   <div class="inp" style="top:19.4px;height:30.2px"><div class="code"><span class="c"># ------------ now made respectable :) ---------------</span></div></div>
   <div class="prompt pin" style="top:68.1px">In [549]:</div>
   <div class="inp" style="top:61.9px;height:30.2px"><div class="code">X.shape, Y.shape <span class="c"># dataset</span></div></div>
   <div class="prompt pout" style="top:96.6px">Out[549]:</div>
   <div class="out" style="top:96.6px">(torch.Size([228146, 3]), torch.Size([228146]))</div>
   <div class="prompt pin" style="top:140.0px">In [550]:</div>
   <div class="inp" style="top:133.8px;height:132.2px"><div class="code">g <span class="o">=</span> torch.Generator().manual_seed(<span class="n">2147483647</span>) <span class="c"># for reproducibility</span>
C <span class="o">=</span> torch.randn((<span class="n">27</span>, <span class="n">2</span>), generator<span class="o">=</span>g)
W1 <span class="o">=</span> torch.randn((<span class="n">6</span>, <span class="n">100</span>), generator<span class="o">=</span>g)
b1 <span class="o">=</span> torch.randn(<span class="n">100</span>, generator<span class="o">=</span>g)
W2 <span class="o">=</span> torch.randn((<span class="n">100</span>, <span class="n">27</span>), generator<span class="o">=</span>g)
b2 <span class="o">=</span> torch.randn(<span class="n">27</span>, generator<span class="o">=</span>g)
parameters <span class="o">=</span> [C, W1, b1, W2, b2]</div></div>
   <div class="prompt pin" style="top:284.8px">In [551]:</div>
   <div class="inp" style="top:278.6px;height:30.2px"><div class="code"><span class="b">sum</span>(p.nelement() <span class="k">for</span> p <span class="k">in</span> parameters) <span class="c"># number of parameters in total</span></div></div>
   <div class="prompt pout" style="top:313.6px">Out[551]:</div>
   <div class="out" style="top:313.6px">3481</div>
   <div class="prompt pin" style="top:357.3px">In [552]:</div>
   <div class="inp" style="top:351.1px;height:47.2px"><div class="code"><span class="k">for</span> p <span class="k">in</span> parameters:
  p.requires_grad <span class="o">=</span> <span class="k">True</span></div></div>
   <div class="prompt pin" style="top:416.2px">In [*]:</div>
   <div class="inp" style="top:410.0px;height:302.2px"><div class="code"><span class="k">for</span> _ <span class="k">in</span> <span class="b">range</span>(<span class="n">10</span>):

  <span class="c"># forward pass</span>
  emb <span class="o">=</span> C[X] <span class="c"># (32, 3, 2)</span>
  h <span class="o">=</span> torch.tanh(emb.view(<span class="o">-</span><span class="n">1</span>, <span class="n">6</span>) <span class="o">@</span> W1 <span class="o">+</span> b1) <span class="c"># (32, 100)</span>
  logits <span class="o">=</span> h <span class="o">@</span> W2 <span class="o">+</span> b2 <span class="c"># (32, 27)</span>
  loss <span class="o">=</span> F.cross_entropy(logits, Y)
  <span class="b">print</span>(loss.item())
  <span class="c"># backward pass</span>
  <span class="k">for</span> p <span class="k">in</span> parameters:
    p.grad <span class="o">=</span> <span class="k">None</span>
  loss.backward()
  <span class="c"># update</span>
  <span class="k">for</span> p <span class="k">in</span> parameters:
    p.data <span class="o">+=</span> <span class="o">-</span><span class="n">0.1</span> <span class="o">*</span> p.grad

</div></div>
   <div class="out" style="top:716.9px">19.505229949951172</div>
   <div class="prompt pin" style="top:760.6px">In [ ]:</div>
   <div class="inp" style="top:754.4px;height:30.2px"><div class="code"></div></div>
  </div>
  <div class="abs" style="left:1196px;top:111px;width:14px;height:862px;background:#f7f7f7"></div>
  <div class="abs" style="left:1199px;top:677px;width:8px;height:270px;border-radius:4px;background:#c3c3c3"></div>
  <svg class="abs" style="left:516.500px;top:673px" width="11" height="20" viewBox="0 0 11 20"><path d="M2 1.500C4 1.500 5.500 2.300 5.500 4V16C5.500 17.700 4 18.500 2 18.500M9 1.500C7 1.500 5.500 2.300 5.500 4M5.500 16C5.500 17.700 7 18.500 9 18.500M3.800 10H7.200" fill="none" stroke="#fff" stroke-width="2.600" stroke-linecap="round"/><path d="M2 1.500C4 1.500 5.500 2.300 5.500 4V16C5.500 17.700 4 18.500 2 18.500M9 1.500C7 1.500 5.500 2.300 5.500 4M5.500 16C5.500 17.700 7 18.500 9 18.500M3.800 10H7.200" fill="none" stroke="#111" stroke-width="1.200" stroke-linecap="round"/></svg>
<div id="jhead" class="abs">
   <svg class="abs" style="left:38px;top:4.5px" width="25" height="29" viewBox="0 0 25 29"><path d="M3.600 10.600C5.200 7.400 8.600 5.500 12.500 5.500s7.300 1.900 8.900 5.100C19.100 9.200 16 8.400 12.500 8.400s-6.600.8-8.900 2.200z" fill="#f37726"/><path d="M3.600 18.200c1.600 3.200 5 5.100 8.900 5.100s7.300-1.900 8.900-5.100c-2.300 1.400-5.400 2.200-8.900 2.200s-6.600-.8-8.900-2.200z" fill="#f37726"/><circle cx="19.700" cy="3.400" r="1.400" fill="#767677"/><circle cx="4.600" cy="26.300" r="1.700" fill="#767677"/><circle cx="3.700" cy="5.300" r="1" fill="#767677"/></svg>
   <div class="abs" id="jlogo" style="left:69.5px;top:4px;font-size:20.500px;line-height:28px;color:#4e4e4e;letter-spacing:1.900px;white-space:nowrap">jupyter</div>
   <div class="abs" id="nbname" style="left:160.3px;top:5px;font-size:18px;line-height:28px;color:#000;white-space:nowrap;letter-spacing:.44px">build_makemore_mlp_yay</div>
   <div class="abs" id="chk" style="left:385.5px;top:7px;font-size:13.150px;line-height:28px;color:#111;white-space:nowrap">Last Checkpoint: a few seconds ago</div>
   <div class="abs" id="uns" style="left:607.5px;top:7px;font-size:12.750px;line-height:28px;color:#111;white-space:nowrap">(unsaved changes)</div>
   <svg class="abs" style="left:1060px;top:6.300px" width="28" height="28" viewBox="0 0 112 112"><path fill="#366f9f" d="M54.900 1.600c-4.500 0-8.800.4-12.600 1.100C31.100 4.700 29.100 8.800 29.100 16.400v10h26.400v3.400H19.200c-7.700 0-14.400 4.600-16.500 13.400-2.400 10.100-2.500 16.400 0 26.900 1.900 7.800 6.400 13.400 14 13.400h9.100V71.400c0-8.700 7.500-16.400 16.500-16.400h26.400c7.300 0 13.200-6 13.200-13.400V16.400c0-7.200-6-12.500-13.200-13.700-4.600-.8-9.300-1.100-13.800-1.100zM40.600 9.700c2.700 0 5 2.300 5 5 0 2.800-2.200 5-5 5s-5-2.200-5-5c0-2.800 2.200-5 5-5z"/><path fill="#ffd545" d="M85.200 29.800v11.700c0 9.100-7.700 16.800-16.500 16.800H42.300c-7.200 0-13.200 6.200-13.200 13.400v25.200c0 7.200 6.200 11.400 13.200 13.400 8.400 2.500 16.400 2.900 26.400 0 6.600-1.900 13.200-5.800 13.200-13.400V86.800H55.500v-3.400h39.600c7.700 0 10.500-5.400 13.200-13.400 2.800-8.300 2.600-16.200 0-26.900-1.900-7.600-5.500-13.400-13.200-13.400h-9.900zM70.400 93.500c2.700 0 5 2.200 5 5s-2.200 5-5 5-5-2.300-5-5c0-2.800 2.200-5 5-5z"/></svg>
   <div class="abs" style="left:1109.500px;top:5.300px;width:61px;height:29px;border:1px solid #d6d6d6;border-radius:2px;background:#fff;font-size:13px;line-height:27.500px;text-align:center;color:#333">Logout</div>
   <div class="abs" style="left:0;top:44px;width:1210px;height:1px;background:#e7e7e7"></div>
   <div id="jmenu" class="abs">
    <span style="left:15.4px">File</span><span style="left:65.4px">Edit</span><span style="left:118.0px">View</span><span style="left:175.4px">Insert</span><span style="left:238.0px">Cell</span><span style="left:290.4px">Kernel</span><span style="left:357.7px">Widgets</span><span style="left:434.5px">Help</span>
    <div class="abs" style="left:967.5px;top:2px;width:52px;height:21.500px;border:1px solid #e2e2e2;border-radius:2px;font-size:12px;line-height:19px;text-align:center;color:#8a8a8a">Trusted</div>
    <div class="abs" style="left:1055.3px;top:3.500px;width:1.500px;height:18px;background:#777"></div>
    <span style="left:1061.5px;color:#444">Python 3</span>
    <div class="abs" style="left:1121.5px;top:7.500px;width:11px;height:11px;border-radius:50%;background:#555"></div>
   </div>
   <!-- toolbar -->
   <div class="tb" style="left:35.5px;width:28px"><svg style="left:7px;top:5px" width="13" height="13" viewBox="0 0 13 13"><path d="M1.100 1.100h8.300l2.500 2.500v8.300H1.100z" fill="none" stroke="#333" stroke-width="1.300" stroke-linejoin="round"/><rect x="3.300" y="1.400" width="5" height="3.100" fill="none" stroke="#333" stroke-width="1.100"/><rect x="3.400" y="7.400" width="6.200" height="4.300" fill="none" stroke="#333" stroke-width="1.100"/></svg></div>
   <div class="tb" style="left:69.5px;width:28px"><svg style="left:8px;top:6px" width="11" height="11" viewBox="0 0 11 11"><path d="M5.500 .6v9.800M.6 5.500h9.800" stroke="#333" stroke-width="2.600"/></svg></div>
   <div class="tb" style="left:103.5px;width:90px"><i style="left:29px"></i><i style="left:59px"></i>
     <svg style="left:8px;top:5px" width="14" height="14" viewBox="0 0 14 14"><circle cx="3" cy="3.400" r="2" fill="none" stroke="#333" stroke-width="1.300"/><circle cx="3" cy="10.600" r="2" fill="none" stroke="#333" stroke-width="1.300"/><path d="M4.600 4.600L13 10.800M4.600 9.400L13 3.200" stroke="#333" stroke-width="1.300" stroke-linecap="round"/></svg>
     <svg style="left:37px;top:4.500px" width="15" height="15" viewBox="0 0 15 15"><path d="M5.200 4.400V1.300h5.200l3 3v6.400H9.600" fill="none" stroke="#333" stroke-width="1.200" stroke-linejoin="round"/><path d="M1.300 4.600h5.200l3 3v6.200H1.300z" fill="#fff" stroke="#333" stroke-width="1.200" stroke-linejoin="round"/></svg>
     <svg style="left:67px;top:4.500px" width="15" height="15" viewBox="0 0 15 15"><path d="M1.200 2.300h9.300v9.900H1.200z" fill="#333"/><rect x="3.400" y=".9" width="4.900" height="2.600" fill="#fff" stroke="#333" stroke-width=".9"/><path d="M6 5.600h4.900l2.900 2.900v5.600H6z" fill="#fff" stroke="#333" stroke-width="1.200" stroke-linejoin="round"/></svg></div>
   <div class="tb" style="left:199px;width:58.500px"><i style="left:28.500px"></i>
     <svg style="left:8px;top:5.500px" width="13" height="13" viewBox="0 0 13 13"><path d="M6.500 12V2.200M1.800 6.600l4.700-4.700 4.700 4.700" fill="none" stroke="#333" stroke-width="2.200" stroke-linejoin="miter"/></svg>
     <svg style="left:37px;top:5.500px" width="13" height="13" viewBox="0 0 13 13"><path d="M6.500 1v9.800M1.800 6.400l4.700 4.700 4.700-4.700" fill="none" stroke="#333" stroke-width="2.200" stroke-linejoin="miter"/></svg></div>
   <div class="tb" style="left:263.5px;width:141px"><i style="left:56px"></i><i style="left:84px"></i><i style="left:113px"></i>
     <svg style="left:7.500px;top:5.500px" width="12" height="13" viewBox="0 0 12 13"><path d="M1 .8l10 5.700-10 5.700z" fill="#333"/></svg>
     <span style="position:absolute;left:22.500px;top:0;line-height:22px;font-size:12.500px;color:#333">Run</span>
     <svg style="left:64.500px;top:6px" width="11" height="11" viewBox="0 0 11 11"><rect width="11" height="11" fill="#333"/></svg>
     <svg style="left:92.500px;top:5px" width="13" height="13" viewBox="0 0 13 13"><path d="M10.900 8.300a4.700 4.700 0 1 1-.6-4.600" fill="none" stroke="#333" stroke-width="2"/><path d="M12.200 .8v5h-5z" fill="#333"/></svg>
     <svg style="left:120px;top:6px" width="14" height="11" viewBox="0 0 14 11"><path d="M.5 .3l6 5.200-6 5.200zM7 .3l6 5.200-6 5.200z" fill="#333"/></svg></div>
   <div class="abs" style="left:410px;top:80.5px;width:117px;height:24px;border:1px solid #ccc;border-radius:2px;background:linear-gradient(#fdfdfd,#f1f1f1);box-shadow:inset 0 1px 1px rgba(0,0,0,.075);font-size:13px;line-height:22px;color:#555"><span style="position:absolute;left:7px">Code</span><svg class="abs" style="left:103px;top:5px" width="7" height="13" viewBox="0 0 7 13"><path d="M3.500 .8L6.300 5H.7zM3.500 12.200L6.300 8H.7z" fill="#444"/></svg></div>
   <div class="tb" style="left:536px;width:32.500px"><svg style="left:8px;top:6.500px" width="15" height="10" viewBox="0 0 15 10"><rect x=".6" y=".6" width="13.800" height="8.800" rx="1" fill="none" stroke="#333" stroke-width="1.200"/><path d="M2.600 3h1.200M5 3h1.200M7.400 3h1.200M9.800 3h1.200M12 3h.6M2.600 5h1.200M5 5h1.200M7.400 5h1.200M9.800 5h1.200M12 5h.6M4.200 7.100h6.600" stroke="#333" stroke-width="1"/></svg></div>
  </div>
 </div>
</div>
</body>
</html>
